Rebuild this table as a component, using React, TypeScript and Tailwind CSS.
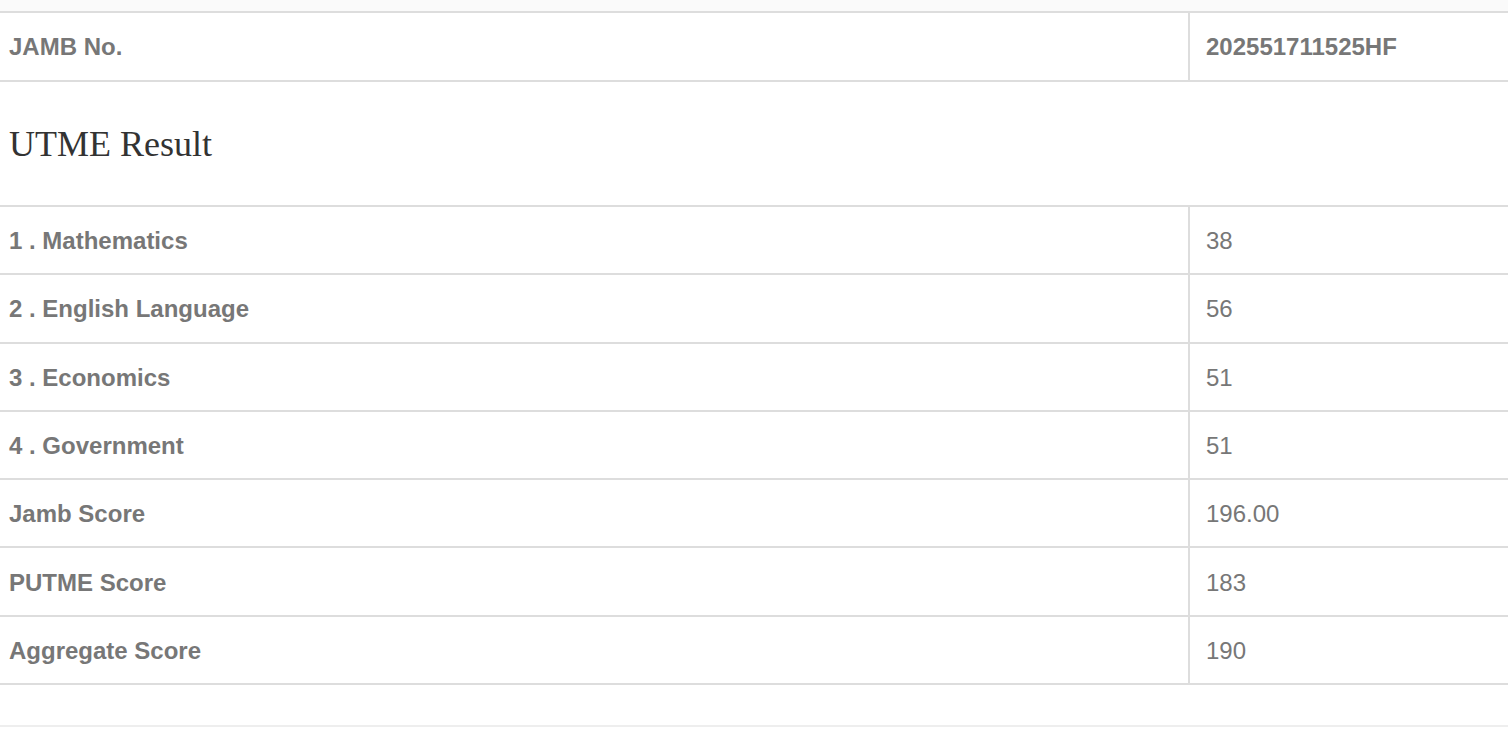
import React from 'react'

const rows: { label: string; value: string }[] = [
  { label: '1 . Mathematics', value: '38' },
  { label: '2 . English Language', value: '56' },
  { label: '3 . Economics', value: '51' },
  { label: '4 . Government', value: '51' },
  { label: 'Jamb Score', value: '196.00' },
  { label: 'PUTME Score', value: '183' },
  { label: 'Aggregate Score', value: '190' },
]

const App: React.FC = () => {
  return (
    <div className="min-h-screen bg-white font-['Liberation_Sans',Arial,sans-serif] text-[24px] text-[#777]">
      <div className="h-[11px] bg-[#fafafa]"></div>

      {/* candidate info */}
      <div className="grid grid-cols-[1188px_1fr] border-y-2 border-[#ddd]">
        <div className="h-[67px] flex items-center pl-[9px] font-bold">JAMB No.</div>
        <div className="h-[67px] flex items-center pl-[16px] border-l-2 border-[#ddd] font-bold">
          202551711525HF
        </div>
      </div>

      <h3 className="h-[123px] flex items-center pl-[9px] font-['Liberation_Serif','Times_New_Roman',serif] text-[36px] text-[#333]">
        UTME Result
      </h3>

      <div className="border-t-2 border-[#ddd]">
        {rows.map((r) => (
          <div key={r.label} className="grid grid-cols-[1188px_1fr] border-b-2 border-[#ddd]">
            <div className="h-[66.3px] flex items-center pl-[9px] pt-[2px] font-bold">{r.label}</div>
            <div className="h-[66.3px] flex items-center pl-[16px] pt-[2px] border-l-2 border-[#ddd]">{r.value}</div>
          </div>
        ))}
      </div>

      <div className="h-[40px]"></div>
      <div className="border-t-2 border-[#eee]"></div>
    </div>
  )
}

export default App
